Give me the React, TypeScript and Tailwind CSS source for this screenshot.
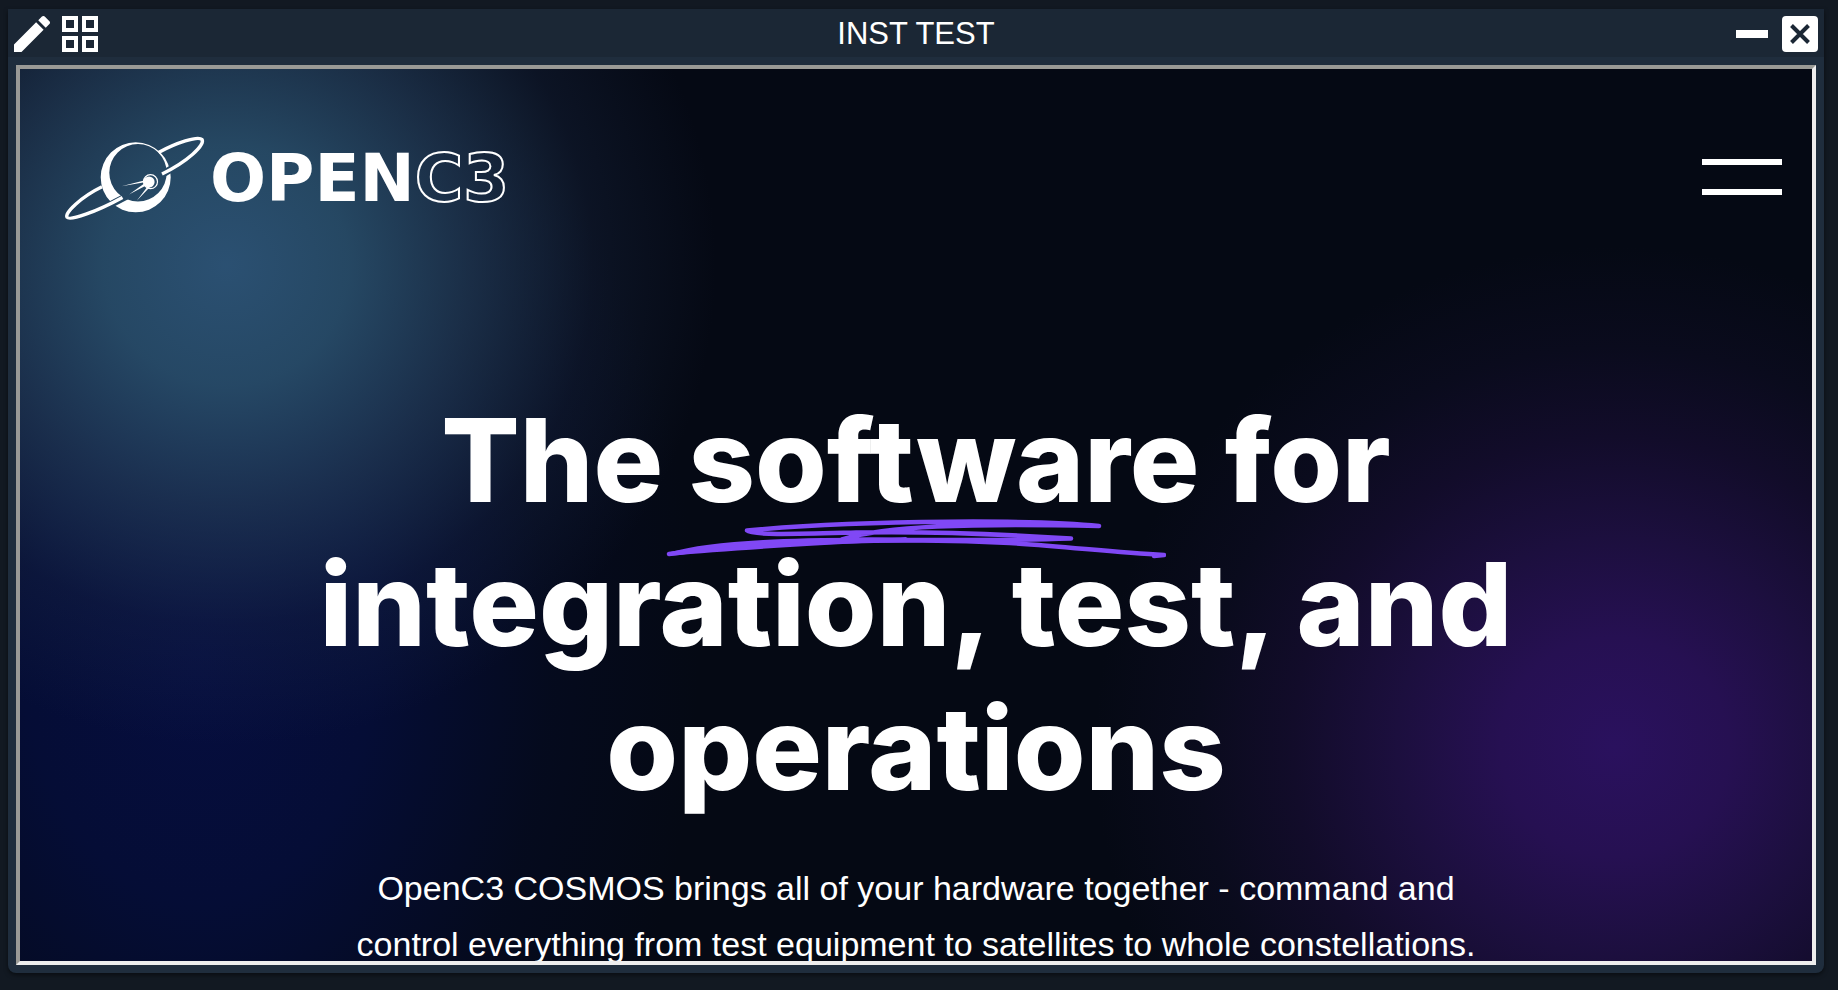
function PlanetMark() {
  return (
    <svg viewBox="0 0 160 96" className="h-24 w-40 shrink-0" fill="none" aria-hidden="true">
      <mask id="ring-gap">
        <rect width="160" height="96" fill="white" />
        <path d="M54 79L78 66.500" stroke="black" strokeWidth="7" />
        <path d="M108 48L126 37" stroke="black" strokeWidth="7" />
      </mask>
      <path
        mask="url(#ring-gap)"
        fill="white"
        fillRule="evenodd"
        d="M85.700 13.300a35 35 0 1 1 0 70a35 35 0 1 1 0-70Z M88 15a28.700 28.700 0 1 0 0 57.400a28.700 28.700 0 1 0 0-57.400Z"
      />
      <path d="M108.500 23.500C126 14 148 6.500 152 10.500C155.500 16 137 33 112 45" stroke="white" strokeWidth="3.400" />
      <path d="M52 57.800C31 68 14.500 84 17 88.200C20 92 46 83 72.500 68.500" stroke="white" strokeWidth="3.400" />
      <circle cx="100.500" cy="52.700" r="7" stroke="white" strokeWidth="1.200" />
      <circle cx="99" cy="53" r="5.600" fill="white" />
      <path d="M71.500 57.300L96 51L96 53Z M79 65.500L95 54L97 56Z M86.500 72L98 57L100 58Z" fill="white" />
    </svg>
  );
}

function Scribble() {
  return (
    <svg
      viewBox="0 0 500 42"
      className="absolute left-1/2 top-[130px] w-[500px] -translate-x-1/2"
      fill="none"
      stroke="#8048f5"
      strokeLinecap="round"
      strokeLinejoin="round"
      aria-hidden="true"
    >
      <path d="M433 8C380 2 200 1 81 12.500C86 17.500 130 16 190 14.500C270 13 350 17 405 20.500C330 23 250 22 176 21.500C220 8 300 5 433 8" strokeWidth="4.500" />
      <path d="M3 36C60 28 160 22 250 22.500C360 22 420 33 498 37L488 38" strokeWidth="4.500" />
      <path d="M4 36C60 20 170 22 240 21C160 25 60 31 4 36Z" fill="#8048f5" strokeWidth="3.500" />
    </svg>
  );
}

export default function App() {
  return (
    <div className="flex h-screen flex-col bg-[#121922] pt-[9px] pr-[14px] pb-[17px] pl-2 font-['Liberation_Sans',sans-serif] text-white">
      <div className="flex min-h-0 flex-1 flex-col overflow-hidden rounded-b-lg bg-[#1f2d3d] shadow-[0_2px_4px_rgba(0,0,0,0.5)]">
        <div className="grid h-12 shrink-0 grid-cols-[1fr_auto_1fr] items-center bg-[#1b2735] px-1.5 pt-0.5">
          <div className="flex items-center gap-3">
            <button type="button" aria-label="Edit" className="size-9">
              <svg viewBox="3 3 18 18" fill="white" className="size-9">
                <path d="M20.710 7.040c.39-.39.39-1.040 0-1.410l-2.340-2.340c-.37-.39-1.020-.39-1.410 0l-1.840 1.830l3.750 3.750M3 17.250V21h3.750L17.810 9.930l-3.750-3.750z" />
              </svg>
            </button>
            <button type="button" aria-label="Layout" className="size-9">
              <svg viewBox="0 0 36 36" className="size-9" fill="none" stroke="white" strokeWidth="4">
                <path d="M2 2h12v12H2zM22 2h12v12H22zM2 22h12v12H2zM22 22h12v12H22z" />
              </svg>
            </button>
          </div>
          <h2 className="text-[31px] leading-[46px]">INST TEST</h2>
          <div className="flex items-center justify-end gap-3.5">
            <button type="button" aria-label="Minimize" className="flex h-9 w-8 items-center">
              <span className="h-2 w-8 bg-white" />
            </button>
            <button type="button" aria-label="Close" className="flex size-9 items-center justify-center rounded-sm bg-white">
              <svg viewBox="0 0 20 20" className="size-5" stroke="#1b2735" strokeWidth="4">
                <path d="M1.500 1.500L18.500 18.500M18.500 1.500L1.500 18.500" />
              </svg>
            </button>
          </div>
        </div>
        <div className="flex min-h-0 flex-1 p-2">
          <main className="min-w-0 flex-1 overflow-hidden border-4 border-t-[#9a9a96] border-r-[#eeeeee] border-b-[#eeeeee] border-l-[#9a9a96] bg-[#050914] bg-[radial-gradient(ellipse_490px_480px_at_11.5%_22%,rgba(45,84,118,0.95)_0%,rgba(42,80,108,0.88)_25%,rgba(36,62,90,0.68)_50%,rgba(28,44,74,0.3)_75%,transparent_100%),radial-gradient(ellipse_500px_700px_at_10%_66%,rgba(6,14,66,0.95)_0%,rgba(5,14,62,0.8)_35%,rgba(5,12,44,0.4)_70%,transparent_100%),radial-gradient(ellipse_520px_500px_at_89%_76%,#2a115e_0%,#261052_22%,#1c0f3e_42%,#120c2a_62%,#0a0b1d_80%,transparent_100%)]">
            <header className="flex items-center justify-between px-[30px] pt-[60px]">
              <a href="#" aria-label="OpenC3 home" className="flex items-center">
                <PlanetMark />
                <span className="flex pt-1 font-['DejaVu_Sans',sans-serif] text-[66px] leading-none font-bold">
                  <span>OPEN</span>
                  <span className="text-transparent [-webkit-text-stroke:2px_white]">C3</span>
                </span>
              </a>
              <button type="button" aria-label="Menu" className="flex flex-col gap-6">
                <span className="h-1.5 w-20 bg-white" />
                <span className="h-1.5 w-20 bg-white" />
              </button>
            </header>
            <section className="mx-auto mt-[163px] max-w-[1240px] text-center">
              <h1 className="relative font-[Inter,sans-serif] text-[116px] leading-[144px] font-extrabold">
                The software for integration, test, and operations
                <Scribble />
              </h1>
              <p className="mx-auto mt-10 max-w-[1170px] text-[34px] leading-[56px]">
                OpenC3 COSMOS brings all of your hardware together - command and control everything from test equipment to
                satellites to whole constellations.
              </p>
            </section>
          </main>
        </div>
      </div>
    </div>
  );
}
